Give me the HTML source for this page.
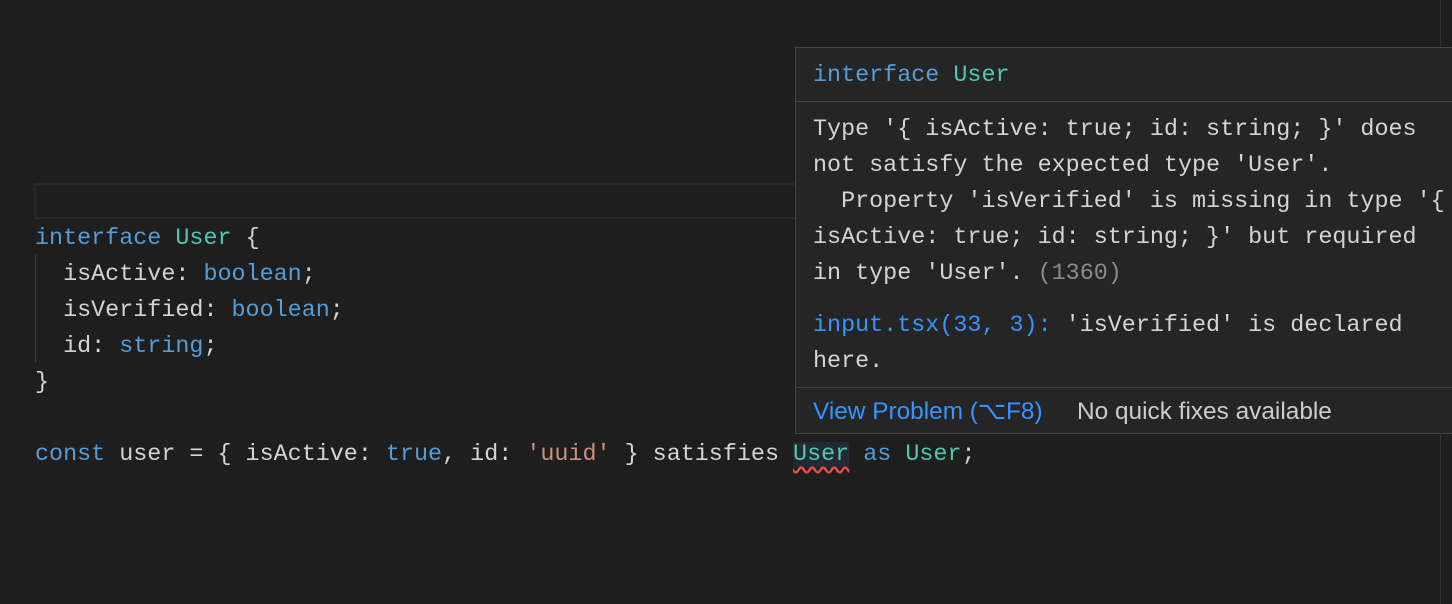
<!DOCTYPE html>
<html><head><style>
body{margin:0;width:1452px;height:604px;background:#1e1e1e;overflow:hidden;position:relative;font-family:"Liberation Mono","DejaVu Sans Mono",monospace;font-size:23.4px;color:#d4d4d4}
.l{position:absolute;left:35px;height:36px;line-height:36px;white-space:pre}
.k{color:#569cd6}.t{color:#4ec9b0}.s{color:#ce9178}
.cur{position:absolute;left:34px;top:183px;width:1420px;height:32px;border:2px solid #282828;box-sizing:content-box}
.guide{position:absolute;left:35px;top:255px;width:1px;height:108px;background:#404040}
.tip{position:absolute;left:795px;top:47px;width:660px;height:387px;background:#252526;border:1px solid #454545;box-sizing:border-box}
.tl{position:absolute;left:17px;white-space:pre;line-height:36px}
.sep{position:absolute;left:0;right:0;height:1px;background:#454545}
.foot{position:absolute;left:0;right:0;top:340px;bottom:0;background:#252526;font-family:"Liberation Sans",sans-serif;font-size:24.4px;line-height:48px}
.vr{position:absolute;left:1440px;top:0;width:1px;height:604px;background:#333}
</style></head><body>
<div class="vr"></div>
<div class="cur"></div>
<div class="guide"></div>
<div class="l" style="top:221px"><span class="k">interface</span> <span class="t">User</span> {</div>
<div class="l" style="top:257px">  isActive: <span class="k">boolean</span>;</div>
<div class="l" style="top:293px">  isVerified: <span class="k">boolean</span>;</div>
<div class="l" style="top:329px">  id: <span class="k">string</span>;</div>
<div class="l" style="top:365px">}</div>
<div class="l" style="top:437px"><span class="k">const</span> user = { isActive: <span class="k">true</span>, id: <span class="s">'uuid'</span> } satisfies <span class="t" style="background:#232a33;text-decoration:underline wavy #f14c4c;text-underline-offset:6px">User</span> <span class="k">as</span> <span class="t">User</span>;</div>
<div class="tip">
<div class="tl" style="top:10px"><span class="k">interface</span> <span class="t">User</span></div>
<div class="sep" style="top:53px"></div>
<div class="tl" style="top:64px">Type '{ isActive: true; id: string; }' does
not satisfy the expected type 'User'.
  Property 'isVerified' is missing in type '{
isActive: true; id: string; }' but required
in type 'User'. <span style="color:#8b8b8b">(1360)</span></div>
<div class="tl" style="top:260px"><span style="color:#3794ff">input.tsx(33, 3):</span> 'isVerified' is declared
here.</div>
<div class="sep" style="top:339px"></div>
<div class="foot"><span style="position:absolute;left:17px;color:#3794ff">View Problem (⌥F8)</span><span style="position:absolute;left:281px;color:#cccccc">No quick fixes available</span></div>
</div>
</body></html>
